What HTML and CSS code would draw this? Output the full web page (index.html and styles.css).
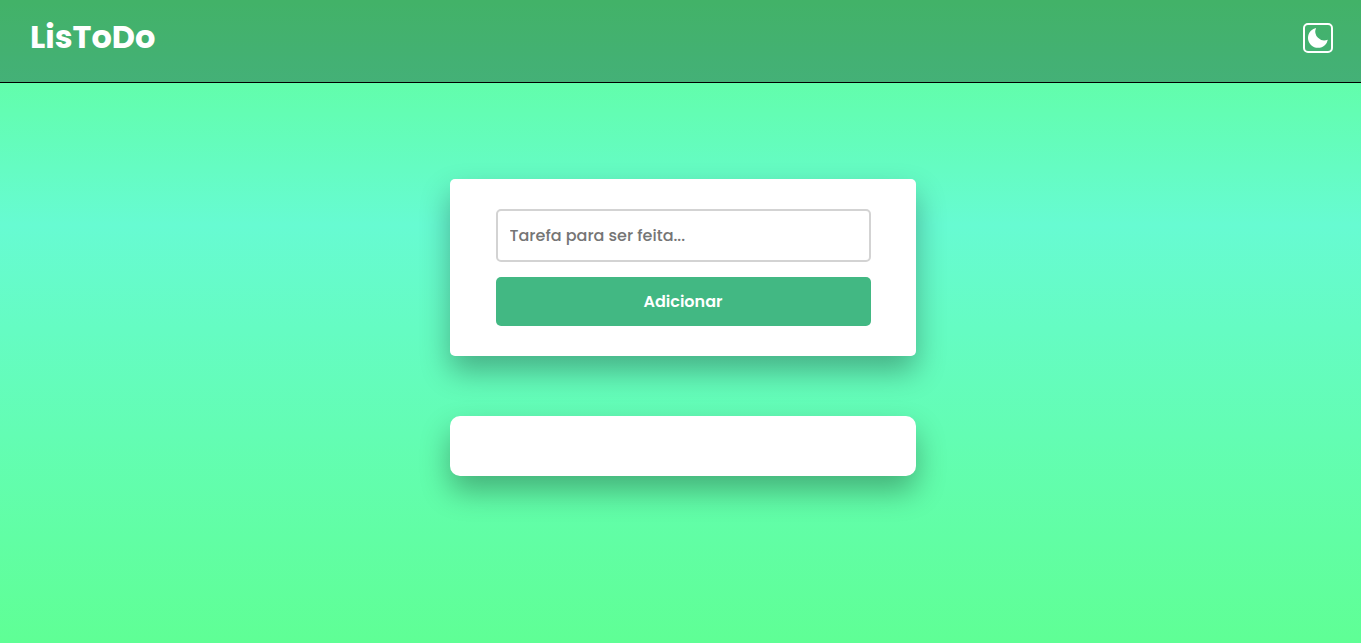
FILE: index.html
```html
<!DOCTYPE html>
<html lang="pt-BR">
<head>
  <meta charset="UTF-8">
  <meta name="viewport" content="width=device-width, initial-scale=1">
  <title>LisToDo</title>
  <link rel="stylesheet" href="styles.css">
</head>
<body>
  <header class="header">
    <h1 class="logo">LisToDo</h1>
    <button class="theme-toggle" type="button" aria-label="Alternar tema">
      <svg class="theme-icon" viewBox="0 0 24 24" aria-hidden="true">
        <path fill="currentColor" d="M12 11.807A9.002 9.002 0 0 1 10.049 2a9.942 9.942 0 0 0-5.12 2.735c-3.905 3.905-3.905 10.237 0 14.142 3.906 3.906 10.237 3.905 14.143 0a9.946 9.946 0 0 0 2.735-5.119A9.003 9.003 0 0 1 12 11.807z"/>
      </svg>
    </button>
  </header>
  <main class="main">
    <form class="card form">
      <input class="task-input" type="text" placeholder="Tarefa para ser feita..." aria-label="Tarefa para ser feita">
      <button class="add-button" type="submit">Adicionar</button>
    </form>
    <ul class="card task-list"></ul>
  </main>
</body>
</html>
```
FILE: styles.css
```css
* {
  box-sizing: border-box;
  margin: 0;
  padding: 0;
  font-family: Poppins, Inter, "Open Sans", sans-serif;
}

body {
  min-height: 100vh;
  background: linear-gradient(180deg, #5fff95 0%, #67fbd2 35%, #5fff95 100%);
}

.header {
  display: flex;
  align-items: flex-start;
  justify-content: space-between;
  height: 83px;
  padding: 12px 28px 0 30px;
  background: rgba(0, 0, 0, 0.3);
  border-bottom: 1px solid #000;
}

.logo {
  color: #fff;
  font-size: 32px;
  font-weight: 700;
  line-height: 50px;
}

.theme-toggle {
  display: flex;
  align-items: center;
  justify-content: center;
  width: 30px;
  height: 30px;
  margin-top: 11px;
  color: #fff;
  background: transparent;
  border: 2px solid #fff;
  border-radius: 5px;
  cursor: pointer;
}

.theme-icon {
  flex: none;
  width: 24px;
  height: 24px;
}

.main {
  display: flex;
  flex-direction: column;
  align-items: center;
  gap: 60px;
  padding: 96px 16px 60px 20px;
}

.card {
  width: 100%;
  max-width: 466px;
  background: #fff;
  border-radius: 5px;
  box-shadow: 0 15px 30px rgba(0, 0, 0, 0.3);
}

.form {
  display: flex;
  flex-direction: column;
  gap: 15px;
  padding: 30px 45px 30px 46px;
}

.task-input {
  width: 100%;
  height: 53px;
  padding: 0 12px;
  color: #333;
  font-size: 16px;
  font-weight: 500;
  border: 2px solid #d3d3d3;
  border-radius: 5px;
}

.task-input::placeholder {
  color: #757575;
}

.add-button {
  height: 49px;
  color: #fff;
  font-size: 16px;
  font-weight: 600;
  background: #42b883;
  border: 0;
  border-radius: 5px;
  cursor: pointer;
}

.task-list {
  min-height: 60px;
  padding: 30px;
  list-style: none;
  border-radius: 10px;
}
```
